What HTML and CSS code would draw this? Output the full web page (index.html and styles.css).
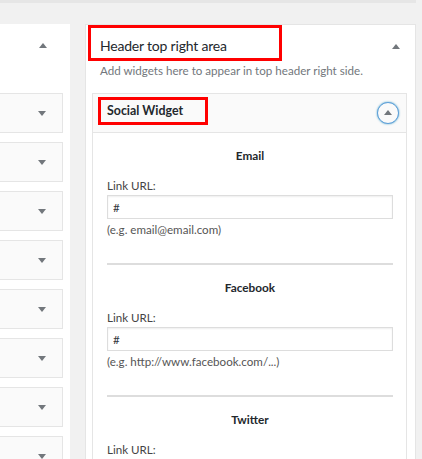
FILE: index.html
```html
<html>

<head>
    <meta charset="UTF-8">
    <link rel="stylesheet" href="styles.css">
</head>

<body>
    <div class="top-strip"></div>

    <div class="columns">
        <div class="panel panel-left">
            <div class="panel-head-left">
                <span class="arrow-up"></span>
            </div>
            <div class="mini-widget"><span class="arrow-down"></span></div>
            <div class="mini-widget"><span class="arrow-down"></span></div>
            <div class="mini-widget"><span class="arrow-down"></span></div>
            <div class="mini-widget"><span class="arrow-down"></span></div>
            <div class="mini-widget"><span class="arrow-down"></span></div>
            <div class="mini-widget"><span class="arrow-down"></span></div>
            <div class="mini-widget"><span class="arrow-down"></span></div>
            <div class="mini-widget"><span class="arrow-down"></span></div>
        </div>

        <div class="panel panel-right">
            <div class="panel-head">
                <h2 class="mark mark-title">Header top right area</h2>
                <span class="arrow-up"></span>
            </div>
            <p class="description">Add widgets here to appear in top header right side.</p>

            <div class="widget">
                <div class="widget-top">
                    <h3 class="mark mark-widget">Social Widget</h3>
                    <button class="toggle"><span class="arrow-up"></span></button>
                </div>

                <div class="widget-inside">
                    <div class="field-group">
                        <h4>Email</h4>
                        <label>Link URL:</label>
                        <input type="text" value="#">
                        <p class="hint">(e.g. email@email.com)</p>
                    </div>
                    <hr>
                    <div class="field-group">
                        <h4>Facebook</h4>
                        <label>Link URL:</label>
                        <input type="text" value="#">
                        <p class="hint">(e.g. http://www.facebook.com/...)</p>
                    </div>
                    <hr>
                    <div class="field-group">
                        <h4>Twitter</h4>
                        <label>Link URL:</label>
                    </div>
                </div>
            </div>
        </div>
    </div>
</body>

</html>
```

FILE: styles.css
```css
* {
    font-family: Lato, "Open Sans", sans-serif;
    box-sizing: border-box;
}
body {
    margin: 0;
    background: #f1f1f1;
    overflow: hidden;
    height: 459px;
}
.top-strip {
    width: 416px;
    height: 3px;
    background: #e6e6e6;
}
.columns {
    display: grid;
    grid-template-columns: 70px 331px;
    column-gap: 15px;
    margin-top: 21px;
}
.panel {
    background: #fff;
    height: 435px;
    overflow: hidden;
}
.panel-left {
    padding-right: 7px;
}
.panel-right {
    border: 1px solid #e5e5e5;
    border-bottom: none;
    padding: 0 8px 0 6px;
}

.arrow-up {
    display: inline-block;
    width: 0;
    height: 0;
    border-left: 4px solid transparent;
    border-right: 4px solid transparent;
    border-bottom: 5px solid #72777c;
}
.arrow-down {
    display: inline-block;
    width: 0;
    height: 0;
    border-left: 4px solid transparent;
    border-right: 4px solid transparent;
    border-top: 5px solid #72777c;
}

.panel-head-left {
    height: 69px;
    display: flex;
    justify-content: flex-end;
    padding: 19px 16px 0 0;
}
.mini-widget {
    height: 40px;
    margin-bottom: 9px;
    background: #fafafa;
    border: 1px solid #e5e5e5;
    border-left: none;
    display: flex;
    justify-content: flex-end;
    align-items: center;
    padding-right: 16px;
}

.panel-head {
    display: flex;
    justify-content: space-between;
    align-items: flex-start;
    margin: 0 0 0 -4px;
}
.panel-head .arrow-up {
    margin: 19px 7px 0 0;
}
.mark {
    border: 3px solid #f00;
    margin: 0;
    color: #23282d;
}
.mark-title {
    width: 194px;
    height: 36px;
    font-size: 14px;
    font-weight: normal;
    letter-spacing: -0.2px;
    line-height: 35px;
    padding-left: 9px;
    margin-top: 0;
}
.description {
    margin: 2px 0 14px 8px;
    font-size: 11.6px;
    line-height: 16px;
    color: #72777c;
}

.widget {
    border: 1px solid #e5e5e5;
    background: #fff;
}
.widget-top {
    height: 39px;
    background: #fafafa;
    border-bottom: 1px solid #e5e5e5;
    display: flex;
    justify-content: space-between;
    align-items: flex-start;
    padding: 3px 7px 0 5px;
}
.mark-widget {
    width: 110px;
    height: 28px;
    font-size: 12.4px;
    font-weight: bold;
    line-height: 22px;
    padding-left: 6px;
}
.toggle {
    width: 22px;
    height: 22px;
    margin-top: 5px;
    border-radius: 50%;
    border: 1px solid #5b9dd9;
    box-shadow: 0 0 2px 0 rgba(30, 140, 190, .8);
    background: #fafafa;
    padding: 0;
    display: flex;
    justify-content: center;
    align-items: center;
}
.toggle .arrow-up {
    margin-top: -1px;
}

.widget-inside {
    padding: 15px 13px 0 14px;
}
.field-group h4 {
    margin: 0 0 14px;
    text-align: center;
    font-size: 11.8px;
    font-weight: bold;
    line-height: 16px;
    color: #23282d;
}
label {
    display: block;
    font-size: 11.6px;
    line-height: 16px;
    color: #444;
    margin-bottom: 1px;
}
input {
    display: block;
    width: 100%;
    height: 24px;
    border: 1px solid #ddd;
    box-shadow: inset 0 1px 2px rgba(0, 0, 0, .07);
    padding: 0 5px;
    font-size: 11.6px;
    color: #32373c;
    background: #fff;
}
.hint {
    margin: 3px 0 25px;
    font-size: 11.6px;
    line-height: 16px;
    color: #555;
}
hr {
    margin: 0 0 15px;
    border: none;
    height: 2px;
    background: #ddd;
}
```
